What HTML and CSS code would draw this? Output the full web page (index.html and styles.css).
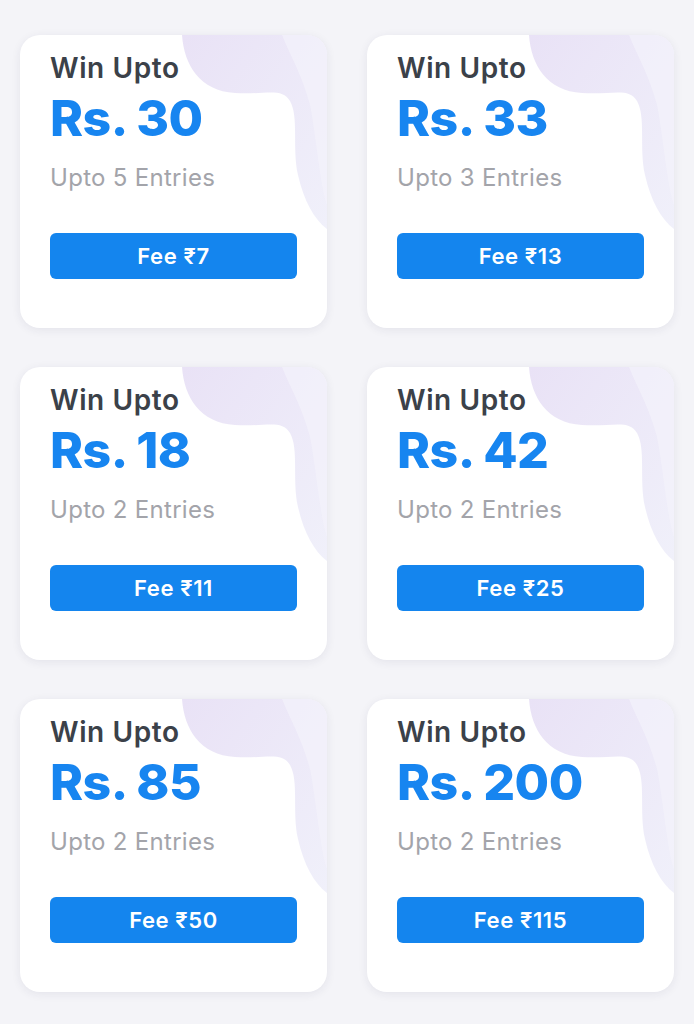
FILE: index.html
```html
<!DOCTYPE html>
<html lang="en">
<head>
  <meta charset="UTF-8" />
  <meta name="viewport" content="width=device-width, initial-scale=1" />
  <title>Contests</title>
  <link rel="stylesheet" href="styles.css">
</head>
<body>

<div class="grid">
  <div class="card">
    <svg class="blob" viewBox="0 0 307 293" preserveAspectRatio="none"><use href="#blobShape"/></svg>
    <div class="label">Win Upto</div>
    <div class="prize">Rs. 30</div>
    <div class="entries">Upto 5 Entries</div>
    <button class="fee">Fee ₹7</button>
  </div>
  <div class="card">
    <svg class="blob" viewBox="0 0 307 293" preserveAspectRatio="none"><use href="#blobShape"/></svg>
    <div class="label">Win Upto</div>
    <div class="prize">Rs. 33</div>
    <div class="entries">Upto 3 Entries</div>
    <button class="fee">Fee ₹13</button>
  </div>
  <div class="card">
    <svg class="blob" viewBox="0 0 307 293" preserveAspectRatio="none"><use href="#blobShape"/></svg>
    <div class="label">Win Upto</div>
    <div class="prize">Rs. 18</div>
    <div class="entries">Upto 2 Entries</div>
    <button class="fee">Fee ₹11</button>
  </div>
  <div class="card">
    <svg class="blob" viewBox="0 0 307 293" preserveAspectRatio="none"><use href="#blobShape"/></svg>
    <div class="label">Win Upto</div>
    <div class="prize">Rs. 42</div>
    <div class="entries">Upto 2 Entries</div>
    <button class="fee">Fee ₹25</button>
  </div>
  <div class="card">
    <svg class="blob" viewBox="0 0 307 293" preserveAspectRatio="none"><use href="#blobShape"/></svg>
    <div class="label">Win Upto</div>
    <div class="prize">Rs. 85</div>
    <div class="entries">Upto 2 Entries</div>
    <button class="fee">Fee ₹50</button>
  </div>
  <div class="card">
    <svg class="blob" viewBox="0 0 307 293" preserveAspectRatio="none"><use href="#blobShape"/></svg>
    <div class="label">Win Upto</div>
    <div class="prize">Rs. 200</div>
    <div class="entries">Upto 2 Entries</div>
    <button class="fee">Fee ₹115</button>
  </div>
</div>

<svg width="0" height="0" style="position:absolute">
  <defs>
    <linearGradient id="blobFill" x1="0" y1="0" x2="1" y2="1">
      <stop offset="0" stop-color="#e9e2f6"/>
      <stop offset="1" stop-color="#f0f0fa"/>
    </linearGradient>
    <g id="blobShape">
      <path fill="url(#blobFill)" d="M162,0 C164,30 180,56 215,58 C245,60 262,52 270,66 C279,82 272,112 278,140 C284,166 294,184 307,194 L307,0 Z"/>
      <path fill="#f3f2fb" opacity="0.7" d="M262,0 C270,20 282,40 290,70 C296,100 300,150 307,170 L307,0 Z"/>
    </g>
  </defs>
</svg>

</body>
</html>
```

FILE: styles.css
```css
* { box-sizing: border-box; }
body, html {
  margin: 0; padding: 0; font-family: Inter, "Noto Sans", sans-serif;
  background: #f4f4f8;
}
.grid {
  display: grid;
  grid-template-columns: 307px 307px;
  column-gap: 40px;
  row-gap: 39px;
  padding: 35px 20px 32px;
}
.card {
  position: relative;
  height: 293px;
  background: #fff;
  border-radius: 20px;
  box-shadow: 0 2px 10px rgba(40, 40, 80, 0.08);
  padding: 18px 30px 0;
  overflow: hidden;
  display: flex;
  flex-direction: column;
  align-items: flex-start;
}
.blob {
  position: absolute;
  top: 0;
  left: 0;
  width: 100%;
  height: 100%;
}
.label, .prize, .entries, .fee {
  position: relative;
}
.label {
  font-size: 28px;
  line-height: 30px;
  font-weight: 600;
  color: #3b4149;
  letter-spacing: 0.6px;
}
.prize {
  margin-top: 10px;
  font-size: 50px;
  line-height: 50px;
  font-weight: 800;
  color: #1785f0;
  letter-spacing: -0.5px;
}
.entries {
  margin-top: 21px;
  font-size: 24px;
  line-height: 28px;
  color: #a3a4aa;
  letter-spacing: 0.3px;
}
.fee {
  margin-top: 41px;
  width: 247px;
  height: 46px;
  border: none;
  border-radius: 6px;
  background: #1485ee;
  color: #fff;
  font-family: inherit;
  font-size: 22px;
  font-weight: 600;
  letter-spacing: 0.6px;
  padding: 0;
}
```
